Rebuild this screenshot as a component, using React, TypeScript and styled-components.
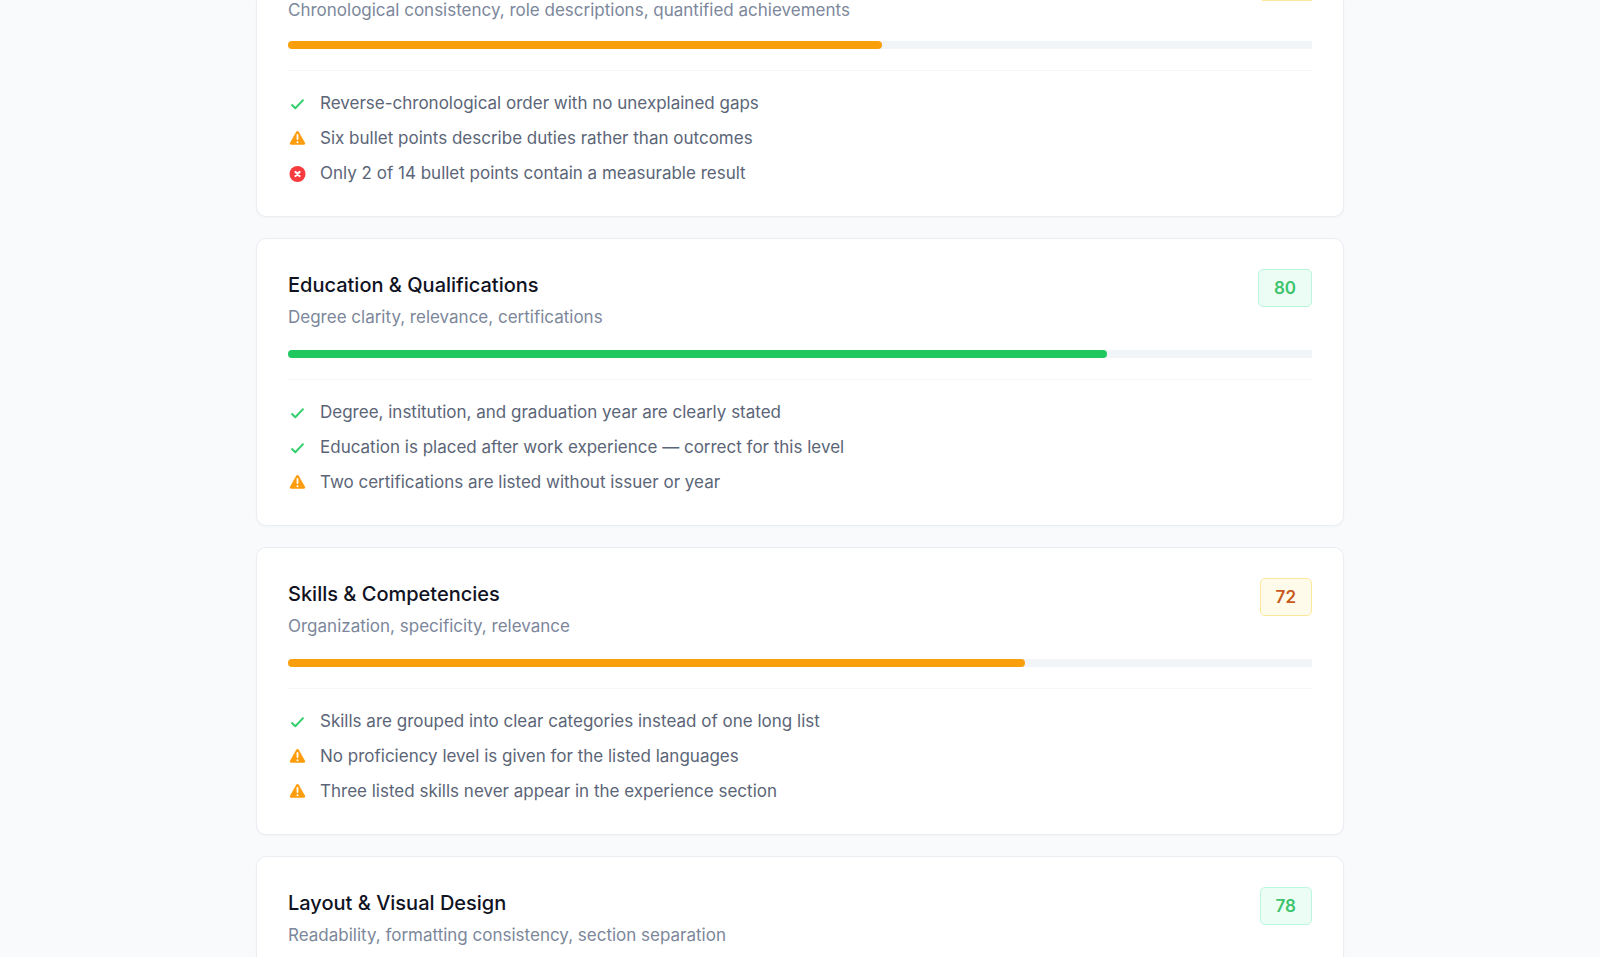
import React from "react";
import styled, { createGlobalStyle } from "styled-components";

type Tone = "good" | "fair";
type Status = "pass" | "warning" | "fail";

interface Finding {
  status: Status;
  text: string;
}

interface Section {
  title?: string;
  description: string;
  score: number;
  tone: Tone;
  findings: Finding[];
}

const tones = {
  good: { text: "#3cc46c", background: "#ecfdf5", border: "#bbf7dc", bar: "#1fc75f" },
  fair: { text: "#c8591c", background: "#fffbeb", border: "#fde79a", bar: "#f99f0b" },
};

const sections: Section[] = [
  {
    description: "Chronological consistency, role descriptions, quantified achievements",
    score: 58,
    tone: "fair",
    findings: [
      { status: "pass", text: "Reverse-chronological order with no unexplained gaps" },
      { status: "warning", text: "Six bullet points describe duties rather than outcomes" },
      { status: "fail", text: "Only 2 of 14 bullet points contain a measurable result" },
    ],
  },
  {
    title: "Education & Qualifications",
    description: "Degree clarity, relevance, certifications",
    score: 80,
    tone: "good",
    findings: [
      { status: "pass", text: "Degree, institution, and graduation year are clearly stated" },
      { status: "pass", text: "Education is placed after work experience — correct for this level" },
      { status: "warning", text: "Two certifications are listed without issuer or year" },
    ],
  },
  {
    title: "Skills & Competencies",
    description: "Organization, specificity, relevance",
    score: 72,
    tone: "fair",
    findings: [
      { status: "pass", text: "Skills are grouped into clear categories instead of one long list" },
      { status: "warning", text: "No proficiency level is given for the listed languages" },
      { status: "warning", text: "Three listed skills never appear in the experience section" },
    ],
  },
  {
    title: "Layout & Visual Design",
    description: "Readability, formatting consistency, section separation",
    score: 78,
    tone: "good",
    findings: [],
  },
];

const GlobalStyle = createGlobalStyle`
  *, *::before, *::after { box-sizing: border-box; }
  body {
    margin: 0;
    background: #f9fafc;
    font-family: Inter, "Liberation Sans", sans-serif;
  }
`;

const Page = styled.main`
  display: flex;
  flex-direction: column;
  gap: 21px;
  width: 100%;
  max-width: 1088px;
  min-height: 100vh;
  margin: 0 auto;
`;

const Card = styled.section<{ $openTop: boolean; $openBottom: boolean }>`
  padding: ${(p) => (p.$openTop ? "0" : "30px")} 31px ${(p) => (p.$openBottom ? "0" : "29px")};
  border: 1px solid #eaedf2;
  border-width: ${(p) => (p.$openTop ? 0 : 1)}px 1px ${(p) => (p.$openBottom ? 0 : 1)}px;
  border-radius: ${(p) =>
    p.$openTop ? "0 0 10px 10px" : p.$openBottom ? "10px 10px 0 0" : "10px"};
  background: #fff;
  box-shadow: 0 1px 2px rgba(15, 23, 42, 0.03);
  flex: ${(p) => (p.$openBottom ? "1 0 auto" : "none")};
`;

const Header = styled.header`
  display: flex;
  align-items: flex-start;
  justify-content: space-between;
  gap: 24px;
  min-height: 24px;
`;

const Title = styled.h2`
  margin: 0;
  color: #10131f;
  font-size: 20px;
  line-height: 32px;
  font-weight: 500;
`;

const Description = styled.p<{ $flush: boolean }>`
  margin: 0;
  color: #7c879b;
  font-size: 17px;
  line-height: ${(p) => (p.$flush ? 20 : 32)}px;
`;

const Badge = styled.span<{ $tone: Tone }>`
  flex: none;
  padding: 0 15px;
  border: 1px solid ${(p) => tones[p.$tone].border};
  border-radius: 5px;
  background: ${(p) => tones[p.$tone].background};
  color: ${(p) => tones[p.$tone].text};
  font-size: 17px;
  line-height: 36px;
  font-weight: 600;
`;

const BadgeEdge = styled.span<{ $tone: Tone }>`
  flex: none;
  width: 50px;
  height: 1px;
  background: ${(p) => tones[p.$tone].border};
`;

const Track = styled.div`
  height: 8px;
  margin-top: 17px;
  border-radius: 4px 0 0 4px;
  background: #f2f5f8;
`;

const Fill = styled.div<{ $tone: Tone }>`
  height: 100%;
  border-radius: 4px;
  background: ${(p) => tones[p.$tone].bar};
`;

const Findings = styled.ul`
  display: flex;
  flex-direction: column;
  gap: 8px;
  margin: 21px 0 0;
  padding: 19px 0 0;
  border-top: 1px solid #f6f7fa;
  list-style: none;
`;

const Item = styled.li`
  display: flex;
  align-items: center;
  gap: 12px;
  color: #5b6577;
  font-size: 17px;
  line-height: 27px;
`;

const Icon = styled.svg`
  flex: none;
  width: 20px;
  height: 20px;
`;

function StatusIcon({ status }: { status: Status }) {
  if (status === "pass") {
    return (
      <Icon viewBox="0 0 20 20" fill="none" aria-hidden="true">
        <path d="M3.500 10.500 7.300 14.200 15.500 5.600" stroke="#34cf6c" strokeWidth="2" strokeLinejoin="round" />
      </Icon>
    );
  }
  if (status === "warning") {
    return (
      <Icon viewBox="0 0 20 20" fill="none" aria-hidden="true">
        <path d="M8.200 2.700c.6-1 2-1 2.600 0l6.200 11.100c.5 1-.1 2-1.200 2H3.200c-1.100 0-1.700-1-1.200-2Z" fill="#fd9d0d" />
        <path d="M9.500 6v4" stroke="#fff" strokeWidth="1.800" strokeLinecap="round" />
        <circle cx="9.500" cy="13.200" r="1" fill="#fff" />
      </Icon>
    );
  }
  return (
    <Icon viewBox="0 0 20 20" fill="none" aria-hidden="true">
      <circle cx="9.500" cy="10" r="8" fill="#f73c40" />
      <path d="m7.500 8 4 4m0-4-4 4" stroke="#fff" strokeWidth="2.200" strokeLinecap="round" />
    </Icon>
  );
}

export default function App() {
  return (
    <>
      <GlobalStyle />
      <Page>
        {sections.map((s, i) => (
          <Card key={s.description} $openTop={!s.title} $openBottom={i === sections.length - 1}>
            <Header>
              <div>
                {s.title && <Title>{s.title}</Title>}
                <Description $flush={!s.title}>{s.description}</Description>
              </div>
              {s.title ? <Badge $tone={s.tone}>{s.score}</Badge> : <BadgeEdge $tone={s.tone} />}
            </Header>
            {s.findings.length > 0 && (
              <>
                <Track>
                  <Fill $tone={s.tone} style={{ width: `${s.score}%` }} />
                </Track>
                <Findings>
                  {s.findings.map((f) => (
                    <Item key={f.text}>
                      <StatusIcon status={f.status} />
                      {f.text}
                    </Item>
                  ))}
                </Findings>
              </>
            )}
          </Card>
        ))}
      </Page>
    </>
  );
}
